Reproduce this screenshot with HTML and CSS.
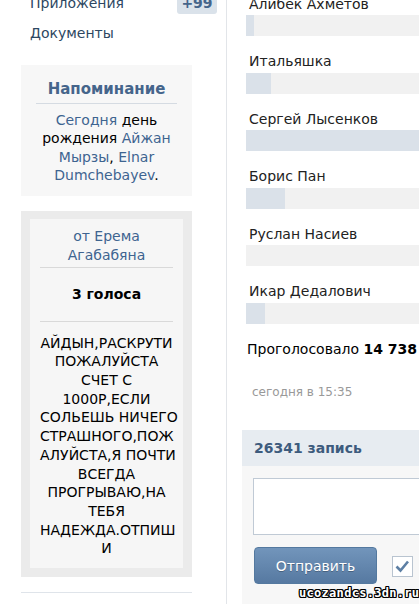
FILE: index.html
```html
<!DOCTYPE html>
<html>
<head>
    <meta charset="utf-8">
    <title>Опрос</title>
    <link rel="stylesheet" href="styles.css">
</head>
<body>
    <div class="page">
        <!-- Left column: menu, reminder and poll card -->
        <div class="side">
            <ul class="menu">
                <li class="menu-item"><a href="#">Приложения</a><span class="badge">+99</span></li>
                <li class="menu-item"><a href="#">Документы</a></li>
            </ul>

            <div class="reminder">
                <div class="reminder-title">Напоминание</div>
                <div class="reminder-text">
                    <a href="#">Сегодня</a> день рождения <a href="#">Айжан Мырзы</a>, <a href="#">Elnar Dumchebayev</a>.
                </div>
            </div>

            <div class="poll-card">
                <div class="poll-inner">
                    <div class="poll-from"><a href="#">от Ерема Агабабяна</a></div>
                    <div class="poll-votes">3 голоса</div>
                    <div class="poll-text">
                        АЙДЫН,РАСКРУТИ<br>
                        ПОЖАЛУЙСТА<br>
                        СЧЕТ С<br>
                        1000Р,ЕСЛИ<br>
                        СОЛЬЕШЬ НИЧЕГО<br>
                        СТРАШНОГО,ПОЖ<br>
                        АЛУЙСТА,Я ПОЧТИ<br>
                        ВСЕГДА<br>
                        ПРОГРЫВАЮ,НА<br>
                        ТЕБЯ<br>
                        НАДЕЖДА.ОТПИШ<br>
                        И
                    </div>
                </div>
            </div>

            <div class="side-rule"></div>
        </div>

        <!-- Right column: poll results and wall form -->
        <div class="main">
            <div class="option">
                <div class="option-name">Алибек Ахметов</div>
                <div class="bar"><div class="bar-fill" style="width: 8px;"></div></div>
            </div>
            <div class="option">
                <div class="option-name">Итальяшка</div>
                <div class="bar"><div class="bar-fill" style="width: 25px;"></div></div>
            </div>
            <div class="option">
                <div class="option-name">Сергей Лысенков</div>
                <div class="bar"><div class="bar-fill" style="width: 240px;"></div></div>
            </div>
            <div class="option">
                <div class="option-name">Борис Пан</div>
                <div class="bar"><div class="bar-fill" style="width: 39px;"></div></div>
            </div>
            <div class="option">
                <div class="option-name">Руслан Насиев</div>
                <div class="bar"><div class="bar-fill" style="width: 0;"></div></div>
            </div>
            <div class="option">
                <div class="option-name">Икар Дедалович</div>
                <div class="bar"><div class="bar-fill" style="width: 19px;"></div></div>
            </div>

            <div class="poll-total">Проголосовало <b>14 738</b></div>
            <div class="poll-date">сегодня в 15:35</div>

            <div class="wall">
                <div class="wall-header">26341 запись</div>
                <div class="wall-body">
                    <textarea class="wall-input"></textarea>
                    <div class="wall-actions">
                        <button class="send-button">Отправить</button>
                        <span class="check">
                            <svg width="21" height="21" viewBox="0 0 21 21">
                                <rect x="0.5" y="0.5" width="20" height="20" fill="#fff" stroke="#b9c4d0"/>
                                <path d="M4.5 10.5 L8.5 14.5 L16 5.5" fill="none" stroke="#5d7fa4" stroke-width="2.6"/>
                            </svg>
                        </span>
                    </div>
                </div>
            </div>
        </div>
    </div>

    <div class="watermark">ucozandcs.3dn.ru</div>
</body>
</html>
```

FILE: styles.css
```css
/* Reset */
* {
    margin: 0;
    padding: 0;
    box-sizing: border-box;
}

body {
    background-color: #fff;
    font-family: "DejaVu Sans", Verdana, sans-serif;
    font-size: 14px;
    line-height: 1.32;
    color: #000;
    overflow: hidden;
}

a {
    color: #3e6490;
    text-decoration: none;
}

/* Two column page, scrolled a little down */
.page {
    display: flex;
    width: 419px;
    height: 620px;
    margin-top: -13px;
    overflow: hidden;
}

.side {
    width: 226px;
    flex-shrink: 0;
    padding: 1px 0 0 21px;
}

.main {
    flex: 1;
    min-width: 0;
    overflow: hidden;
    border-left: 1px solid #e2e5e9;
    padding: 8px 0 0 15px;
}

/* Left menu */
.menu {
    list-style: none;
}

.menu-item {
    display: flex;
    align-items: center;
    justify-content: space-between;
    height: 30px;
    padding: 0 9px;
}

.menu-item a {
    color: #2d4762;
}

.badge {
    background-color: #dae2ea;
    color: #45658a;
    font-weight: bold;
    border-radius: 3px;
    width: 40px;
    height: 22px;
    line-height: 22px;
    text-align: center;
}

/* Birthday reminder */
.reminder {
    width: 171px;
    margin-top: 17px;
    background-color: #f7f7f7;
    text-align: center;
}

.reminder-title {
    margin: 0 15px;
    padding: 14px 0 4px;
    line-height: 20px;
    font-size: 15px;
    font-weight: bold;
    color: #45658b;
    border-bottom: 1px solid #d5dbe2;
}

.reminder-text {
    padding: 7px 13px 12px;
    line-height: 18.3px;
}

/* Poll card */
.poll-card {
    width: 171px;
    margin-top: 15px;
    background-color: #ebebeb;
    padding: 8px 9px 9px;
}

.poll-inner {
    background-color: #f6f6f6;
    padding: 8px 10px 10px;
    text-align: center;
}

.poll-from {
    padding-bottom: 3px;
    border-bottom: 1px solid #d9d9d9;
}

.poll-votes {
    padding: 17px 0;
    font-weight: bold;
    border-bottom: 1px solid #d9d9d9;
}

.poll-text {
    padding-top: 12px;
    line-height: 18.7px;
    white-space: nowrap;
}

.side-rule {
    width: 171px;
    margin-top: 15px;
    border-top: 1px solid #dfe4ea;
}

/* Poll results */
.option {
    margin: 0 0 16px 4px;
}

.option-name {
    padding-left: 3px;
    margin-bottom: 2px;
    color: #222;
    white-space: nowrap;
}

.bar {
    width: 300px;
    height: 21px;
    background-color: #f1f1f1;
}

.bar-fill {
    height: 100%;
    background-color: #dae1e9;
}

.poll-total {
    margin: 8px 0 0 5px;
    white-space: nowrap;
}

.poll-date {
    margin: 26px 0 0 10px;
    font-size: 12px;
    line-height: 17px;
    color: #999;
}

/* Wall post form */
.wall {
    width: 300px;
    margin-top: 29px;
}

.wall-header {
    height: 36px;
    line-height: 36px;
    padding-left: 12px;
    background-color: #e7ecf1;
    color: #3d5b7d;
    font-weight: bold;
}

.wall-body {
    background-color: #f7f7f7;
    padding: 12px 11px 30px;
}

.wall-input {
    display: block;
    width: 100%;
    height: 57px;
    border: 1px solid #c0cad5;
    background-color: #fff;
    resize: none;
}

.wall-actions {
    display: flex;
    align-items: center;
    gap: 15px;
    margin-top: 12px;
    padding-left: 1px;
}

.send-button {
    width: 123px;
    height: 37px;
    border: 1px solid #54799f;
    border-radius: 4px;
    background: linear-gradient(#7295bb, #5679a1);
    color: #fff;
    font-family: inherit;
    font-size: 14px;
    text-shadow: 0 1px 0 rgba(0, 0, 0, 0.25);
}

.check {
    display: block;
    width: 21px;
    height: 21px;
    margin-top: 2px;
}

/* Site watermark */
.watermark {
    position: absolute;
    left: 299px;
    top: 586px;
    font-family: "DejaVu Sans Mono", monospace;
    font-weight: bold;
    font-size: 12px;
    letter-spacing: 0.3px;
    color: #fff;
    text-shadow: 1px 0 0 #000, -1px 0 0 #000, 0 1px 0 #000, 0 -1px 0 #000,
        1px 1px 0 #000, -1px -1px 0 #000, 1px -1px 0 #000, -1px 1px 0 #000;
}
```
